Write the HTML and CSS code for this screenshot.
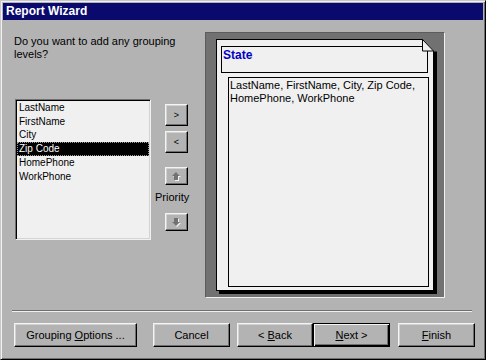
FILE: index.html
```html
<!DOCTYPE html>
<html>
<head>
<meta charset="utf-8">
<title>Report Wizard</title>
<link rel="stylesheet" href="styles.css">
</head>
<body>
<div class="window">
  <div class="titlebar">Report Wizard</div>
  <div class="main">
    <div class="leftcol">
      <p class="question">Do you want to add any grouping<br>levels?</p>
      <ul class="listbox">
        <li>LastName</li>
        <li>FirstName</li>
        <li>City</li>
        <li class="sel">Zip Code</li>
        <li>HomePhone</li>
        <li>WorkPhone</li>
      </ul>
    </div>
    <div class="midcol">
      <button class="btn sm first"><span>&gt;</span></button>
      <button class="btn sm second"><span>&lt;</span></button>
      <button class="btn arrow up">
        <svg width="9" height="9" viewBox="0 0 9 9"><polygon points="5,1 9,5 7,5 7,9 3,9 3,5 1,5" fill="#f4f4f4"/><polygon points="4,0 8,4 6,4 6,8 2,8 2,4 0,4" fill="#727272"/></svg>
      </button>
      <div class="priority">Priority</div>
      <button class="btn arrow down">
        <svg width="9" height="9" viewBox="0 0 9 9"><polygon points="5,9 9,5 7,5 7,1 3,1 3,5 1,5" fill="#f4f4f4"/><polygon points="4,8 8,4 6,4 6,0 2,0 2,4 0,4" fill="#727272"/></svg>
      </button>
    </div>
    <div class="preview">
      <div class="page">
        <div class="grp">State</div>
        <div class="detail">LastName, FirstName, City, Zip Code, HomePhone, WorkPhone</div>
        <svg class="dogear" width="16" height="14" viewBox="0 0 16 14">
          <polygon points="1.5,0 16,0 16,12.5 13,12.5" fill="#717171"/>
          <polygon points="1.5,0.5 12.5,12 1.5,12" fill="#f0f0f0" stroke="#000" stroke-width="1"/>
        </svg>
      </div>
    </div>
  </div>
  <div class="separator"></div>
  <div class="buttons">
    <button class="btn big grouping"><span>Grouping <u>O</u>ptions ...</span></button>
    <button class="btn big cancel"><span>Cancel</span></button>
    <button class="btn big back"><span>&lt; <u>B</u>ack</span></button>
    <button class="btn big next"><span><u>N</u>ext &gt;</span></button>
    <button class="btn big finish"><span><u>F</u>inish</span></button>
  </div>
</div>
</body>
</html>
```
FILE: styles.css
```css
body {
  margin: 0;
  background: #b3b3b3;
  font-family: "Liberation Sans", Arial, sans-serif;
  font-size: 11px;
  color: #000;
}

.window {
  width: 486px;
  height: 360px;
  box-sizing: border-box;
  border: 1px solid;
  border-color: #c8c8c8 #000 #000 #c8c8c8;
  box-shadow: inset 1px 1px #f0f0f0, inset -1px -1px #6f6f6f;
  padding: 2px;
  background: #b3b3b3;
  display: flex;
  flex-direction: column;
}

.titlebar {
  height: 17px;
  line-height: 17px;
  background: #0a0a6e;
  color: #fff;
  font-weight: bold;
  font-size: 12px;
  padding-left: 3px;
  flex: none;
}

.main {
  display: flex;
  padding: 12px 0 0 11px;
  flex: none;
}

.leftcol {
  width: 137px;
  flex: none;
}

.question {
  margin: 0;
  padding-top: 2.5px;
  line-height: 13px;
  white-space: nowrap;
}

.listbox {
  list-style: none;
  margin: 38.5px 0 0 1px;
  padding: 1px;
  width: 136px;
  height: 141px;
  box-sizing: border-box;
  border: 1px solid;
  border-color: #6f6f6f #f0f0f0 #f0f0f0 #6f6f6f;
  box-shadow: inset 1px 1px #000, inset -1px -1px #d4d4d4;
  background: #f0f0f0;
  font-size: 10px;
}

.listbox li {
  line-height: 13.7px;
  padding-left: 2px;
  white-space: nowrap;
}

.listbox li.sel {
  background: #000;
  color: #fff;
  outline: 1px dotted #9a9a9a;
  outline-offset: -1px;
}

.midcol {
  width: 37px;
  margin-left: 4px;
  flex: none;
  display: flex;
  flex-direction: column;
  align-items: flex-start;
}

.btn {
  box-sizing: border-box;
  background: #b3b3b3;
  border: 1px solid;
  border-color: #f4f4f4 #000 #000 #f4f4f4;
  box-shadow: inset -1px -1px #6f6f6f, inset 1px 1px #d2d2d2;
  font: 11px "Liberation Sans", Arial, sans-serif;
  color: #000;
  padding: 0;
  display: flex;
  align-items: center;
  justify-content: center;
  flex: none;
  white-space: pre;
}

.sm {
  width: 23px;
  height: 22px;
  margin-left: 10px;
  font-size: 9px;
}

.sm.first { margin-top: 72px; }
.sm.second { margin-top: 5px; }

.arrow {
  width: 23px;
  height: 18px;
  margin-left: 10px;
}

.arrow.up { margin-top: 14px; }
.arrow.down { margin-top: 9.5px; }

.priority {
  line-height: 13px;
  margin-top: 5.5px;
}

.preview {
  width: 240px;
  height: 266px;
  box-sizing: border-box;
  border: 1px solid;
  border-color: #5c5c5c #f0f0f0 #f0f0f0 #5c5c5c;
  background: #717171;
  margin-left: 13px;
  padding: 6px 0 0 10px;
  flex: none;
}

.page {
  position: relative;
  width: 218px;
  height: 252px;
  box-sizing: border-box;
  border: 1px solid #000;
  box-shadow: 3px 3px 0 #000;
  background: #f0f0f0;
  padding: 6px 0 0 4px;
}

.grp {
  width: 207px;
  height: 27px;
  box-sizing: border-box;
  border: 1px solid #000;
  color: #0000c8;
  font-weight: bold;
  font-size: 12px;
  line-height: 14px;
  padding: 0.5px 0 0 1px;
}

.detail {
  margin: 4px 0 0 7px;
  width: 201px;
  height: 210px;
  box-sizing: border-box;
  border: 1px solid #000;
  padding: 1px 0 0 1px;
  line-height: 13px;
  font-size: 11px;
}

.dogear {
  position: absolute;
  top: -1px;
  right: -4px;
  display: block;
}

.separator {
  height: 0;
  border-top: 1px solid #6f6f6f;
  border-bottom: 1px solid #f0f0f0;
  margin: 12px 11px 0 9px;
  flex: none;
}

.buttons {
  display: flex;
  margin-top: 11px;
  padding-left: 11px;
  flex: none;
}

.big { height: 24px; }
.grouping { width: 123px; }
.cancel { width: 77px; margin-left: 16px; }
.back { width: 76px; margin-left: 7px; }
.next {
  width: 77px;
  border-color: #000;
  box-shadow: inset 1px 1px #f4f4f4, inset -1px -1px #000, inset -2px -2px #6f6f6f;
}
.finish { width: 77px; margin-left: 8px; }
```
